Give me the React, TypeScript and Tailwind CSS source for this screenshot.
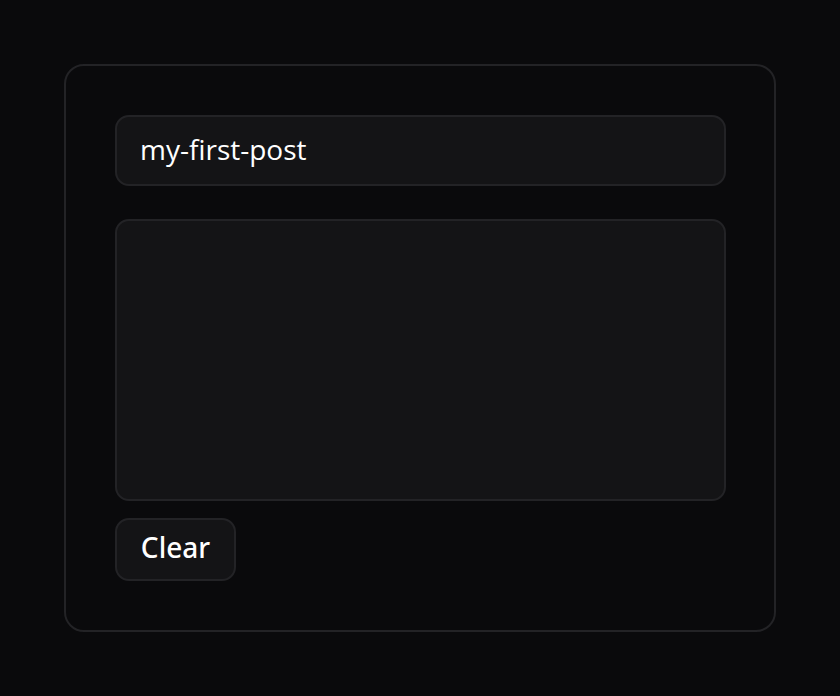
import React from "react";

export default function App() {
  return (
    <div
      className="min-h-[696px] w-full bg-[#0a0a0c] pt-[64px] pl-[64px]"
      style={{ fontFamily: '"Open Sans", "Noto Sans", sans-serif' }}
    >
      <div className="w-[712px] h-[568px] rounded-[20px] border-2 border-[#232326] p-[49px] flex flex-col">
        {/* Slug */}
        <input
          defaultValue="my-first-post"
          className="h-[71px] w-[611px] rounded-[14px] border-2 border-[#232326] bg-[#141416] px-[23px] pb-[2px] text-[28px] text-white outline-none"
        />

        {/* Body */}
        <textarea className="mt-[33px] h-[284px] w-[611px] resize-none rounded-[14px] border-2 border-[#232326] bg-[#141416] outline-none" />

        {/* Actions */}
        <div className="mt-[17px] flex">
          <button
            className="h-[63px] w-[121px] rounded-[14px] border-2 border-[#232326] bg-[#141416] pb-[5px] text-[28px] font-medium text-white"
            style={{ fontFamily: '"Noto Sans", "Open Sans", sans-serif' }}
          >
            Clear
          </button>
        </div>
      </div>
    </div>
  );
}
